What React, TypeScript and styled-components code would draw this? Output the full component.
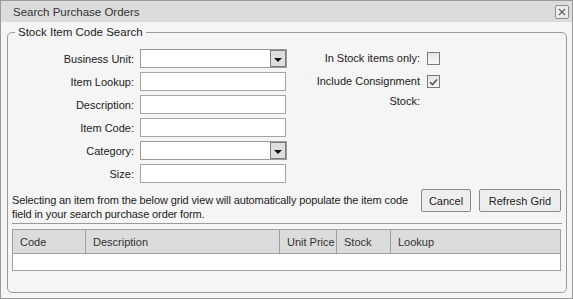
import React from 'react';
import styled, { createGlobalStyle } from 'styled-components';

const GlobalStyle = createGlobalStyle`
  html, body {
    margin: 0;
    padding: 0;
    background: #ffffff;
  }
  body {
    font-family: "Liberation Sans", Arial, sans-serif;
    font-size: 11px;
    color: #222;
  }
`;

const Window = styled.div`
  box-sizing: border-box;
  width: 573px;
  height: 299px;
  border: 1px solid #9a9a9a;
  background: #f5f5f5;
  display: flex;
  flex-direction: column;
`;

const TitleBar = styled.div`
  height: 21px;
  flex-shrink: 0;
  background: #dcdcdc;
  display: flex;
  align-items: center;
  justify-content: space-between;
  padding: 0 3px 0 12px;
`;

const Title = styled.span`
  font-size: 11.5px;
  color: #333;
`;

const CloseButton = styled.button`
  box-sizing: border-box;
  width: 14px;
  height: 14px;
  padding: 0;
  border: 1px solid #8c8c8c;
  border-radius: 2px;
  background: #ececec;
  display: flex;
  align-items: center;
  justify-content: center;
  cursor: pointer;
`;

const Group = styled.fieldset`
  box-sizing: border-box;
  height: 268px;
  margin: 3px 5px 0 6px;
  padding: 9px 4px 0 4px;
  border: 1px solid #9a9a9a;
  border-radius: 5px;
  min-width: 0;
`;

const Legend = styled.legend`
  margin-left: 3px;
  padding: 0 3px;
  font-size: 11.5px;
  line-height: 14px;
  color: #222;
`;

const TopSection = styled.div`
  display: flex;
  align-items: flex-start;
`;

const LeftForm = styled.div`
  margin-top: 1px;
  display: grid;
  grid-template-columns: 122px 147px;
  grid-auto-rows: 19px;
  column-gap: 6px;
  row-gap: 4px;
  align-items: center;
`;

const RightForm = styled.div`
  margin-left: 25px;
  display: grid;
  grid-template-columns: 108px 13px;
  column-gap: 7px;
  row-gap: 3px;
  line-height: 20px;
`;

const Label = styled.label`
  text-align: right;
  white-space: nowrap;
`;

const WrapLabel = styled.label`
  text-align: right;
`;

const TextInput = styled.input`
  box-sizing: border-box;
  width: 146px;
  height: 19px;
  margin: 0;
  padding: 1px 3px;
  border: 1px solid #a5a5a5;
  background: #fff;
  font: inherit;
`;

const Select = styled.div`
  box-sizing: border-box;
  width: 147px;
  height: 19px;
  border: 1px solid #9a9a9a;
  background: #fff;
  display: flex;
  justify-content: flex-end;
`;

const DropButton = styled.span`
  box-sizing: border-box;
  width: 16px;
  height: 17px;
  border: 1px solid #7c7c7c;
  background: #dedede;
  display: flex;
  align-items: center;
  justify-content: center;

  &::after {
    content: '';
    margin-top: 2px;
    border-left: 4px solid transparent;
    border-right: 4px solid transparent;
    border-top: 4px solid #111;
  }
`;

const CheckBox = styled.span`
  box-sizing: border-box;
  width: 13px;
  height: 13px;
  margin-top: 4px;
  border: 1px solid #7a7a7a;
  background: linear-gradient(#e6e6e6, #f8f8f8);
  display: flex;
  align-items: center;
  justify-content: center;
`;

const ActionRow = styled.div`
  margin-top: 6px;
  display: flex;
  align-items: flex-start;
`;

const Hint = styled.p`
  flex: 1;
  margin: 4px 0 0;
  line-height: 14px;
  letter-spacing: -0.12px;
`;

const Buttons = styled.div`
  display: flex;
  gap: 8px;
  margin-left: 6px;
  margin-right: 1px;
`;

const Button = styled.button<{ $width: number }>`
  box-sizing: border-box;
  width: ${p => p.$width}px;
  height: 23px;
  padding: 0;
  border: 1px solid #8a8a8a;
  border-radius: 2px;
  background: #eeeeee;
  font: inherit;
  color: #222;
  cursor: pointer;
`;

const Separator = styled.hr`
  margin: 2px 0 0;
  border: none;
  border-top: 1px solid #9a9a9a;
  height: 0;
`;

const Grid = styled.div`
  margin-top: 5px;
  margin-right: 1px;
  border: 1px solid #a0a0a0;
  background: #fff;
`;

const HeaderRow = styled.div`
  display: grid;
  grid-template-columns: 72px 194px 57px 54px 1fr;
  height: 23px;
  background: #dcdcdc;
  border-bottom: 1px solid #a0a0a0;
`;

const HeaderCell = styled.div`
  display: flex;
  align-items: center;
  padding-left: 7px;
  border-left: 1px solid #a0a0a0;
  color: #333;

  &:first-child {
    border-left: none;
  }
`;

const GridBody = styled.div`
  height: 16px;
  background: #fff;
`;

const columns = ['Code', 'Description', 'Unit Price', 'Stock', 'Lookup'];

export default function App() {
  return (
    <>
      <GlobalStyle />
      <Window>
        <TitleBar>
          <Title>Search Purchase Orders</Title>
          <CloseButton aria-label="Close">
            <svg width="8" height="8" viewBox="0 0 8 8">
              <path d="M1 1L7 7M7 1L1 7" stroke="#666" strokeWidth="1.4" />
            </svg>
          </CloseButton>
        </TitleBar>

        <Group>
          <Legend>Stock Item Code Search</Legend>

          <TopSection>
            <LeftForm>
              <Label>Business Unit:</Label>
              <Select><DropButton /></Select>
              <Label>Item Lookup:</Label>
              <TextInput />
              <Label>Description:</Label>
              <TextInput />
              <Label>Item Code:</Label>
              <TextInput />
              <Label>Category:</Label>
              <Select><DropButton /></Select>
              <Label>Size:</Label>
              <TextInput />
            </LeftForm>

            <RightForm>
              <Label>In Stock items only:</Label>
              <CheckBox />
              <WrapLabel>Include Consignment Stock:</WrapLabel>
              <CheckBox>
                <svg width="9" height="8" viewBox="0 0 9 8">
                  <path d="M1 4L3.5 6.5L8 1.5" fill="none" stroke="#555" strokeWidth="1.6" />
                </svg>
              </CheckBox>
            </RightForm>
          </TopSection>

          <ActionRow>
            <Hint>
              Selecting an item from the below grid view will automatically populate the item code
              field in your search purchase order form.
            </Hint>
            <Buttons>
              <Button $width={50}>Cancel</Button>
              <Button $width={82}>Refresh Grid</Button>
            </Buttons>
          </ActionRow>

          <Separator />

          <Grid>
            <HeaderRow>
              {columns.map(c => (
                <HeaderCell key={c}>{c}</HeaderCell>
              ))}
            </HeaderRow>
            <GridBody />
          </Grid>
        </Group>
      </Window>
    </>
  );
}
